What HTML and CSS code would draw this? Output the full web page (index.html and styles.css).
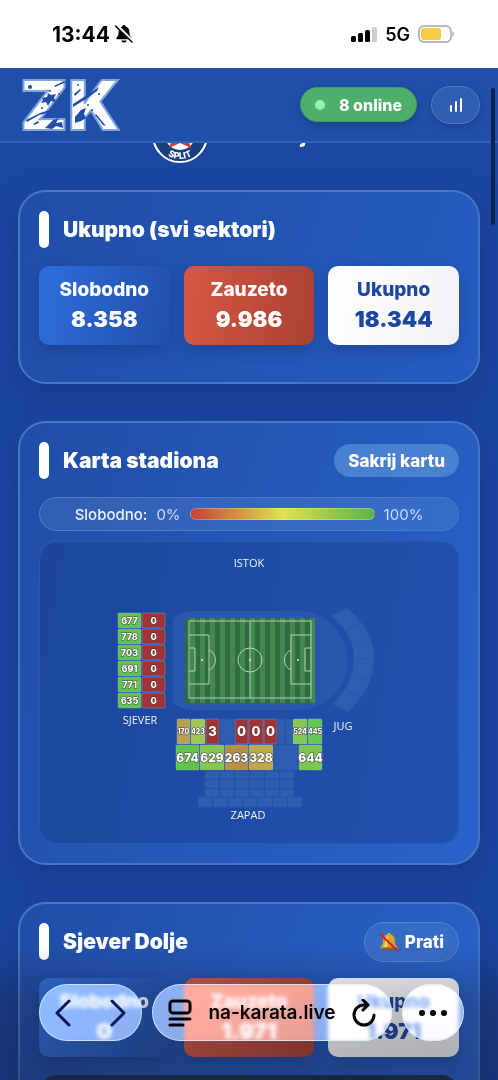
FILE: index.html
```html
<!DOCTYPE html>
<html lang="hr">
<head>
  <meta charset="UTF-8">
  <meta name="viewport" content="width=device-width, initial-scale=1">
  <title>na-karata.live</title>
  <link rel="stylesheet" href="styles.css">
</head>
<body>
  <div class="screen">
    <div class="status-bar">
      <div class="status-time">
        <span>13:44</span>
        <svg width="20" height="20" viewBox="0 0 20 20" aria-hidden="true">
          <path d="M10 1c1 0 1.500.6 1.600 1.400C14.200 3.200 15.300 5 15.400 8c.1 3.300.8 4.400 2.200 5.800.5.6.2 1.400-.6 1.400H3c-.8 0-1.100-.8-.6-1.400C3.800 12.400 4.500 11.300 4.600 8c.1-3 1.200-4.800 3.800-5.600C8.500 1.600 9 1 10 1zM7.400 16.400h5.200c-.3 1.300-1.200 2.100-2.600 2.100s-2.300-.8-2.600-2.100z" fill="#000"/>
          <path d="M2.600 1.200l16 16" stroke="#fff" stroke-width="3"/>
          <path d="M1.500 2l16.500 16" stroke="#000" stroke-width="1.500" stroke-linecap="round"/>
        </svg>
      </div>
      <div class="status-net">
        <svg width="26" height="17" viewBox="0 0 26 17" aria-hidden="true">
          <rect x="0" y="10" width="5" height="6" rx="1.500"/>
          <rect x="7" y="7" width="5" height="9" rx="1.500"/>
          <rect x="14" y="4" width="5" height="12" rx="1.500"/>
          <rect x="21" y="1" width="5" height="15" rx="1.500" fill="#ccc"/>
        </svg>
        <span>5G</span>
        <svg width="37" height="18" viewBox="0 0 37 18" aria-hidden="true">
          <rect x="1" y="1" width="32" height="16" rx="5" fill="#fff" stroke="#a5a5a5" stroke-width="1.500"/>
          <rect x="3" y="3" width="20" height="12" rx="3" fill="#f6cb45"/>
          <path d="M34.500 6.500c2 .5 2 4.500 0 5z" fill="#a5a5a5"/>
        </svg>
      </div>
    </div>

    <header class="header">
      <a class="logo" href="#" aria-label="ZK">
        <svg width="110" height="66" viewBox="0 0 110 66">
          <text class="logo-text" x="2" y="58">ZK</text>
          <g fill="#204fa9">
            <path d="M24 26l5-1 1-4 3 2 5-1-2 4 2 4-5-1-3 5-2-4-5 1 2-3z"/>
            <path d="M36 14l10-5 2 1-11 5zM8 48l14-7 13-4-2 3-12 3-12 7zM27 56l8-8 6-2-3 5 6-1 1 6-7-2-4 3zM15 52l5-3 1 2-5 2z"/>
            <path d="M55 32l14-9 12-8-2 4-11 8-13 8zM57 45l6-7 5-2-2 6 2 4-5 3-6 2zM56 22l6-5 1 1-6 6zM78 42l10 12-3-1-8-10z"/>
            <circle cx="12" cy="15" r="2"/><circle cx="32" cy="19" r="1"/><circle cx="24" cy="36" r="1"/><circle cx="41" cy="22" r="1"/><circle cx="70" cy="33" r="1"/><circle cx="81" cy="22" r="1"/><circle cx="60" cy="13" r="1"/><circle cx="74" cy="38" r="1"/>
          </g>
        </svg>
      </a>
      <div class="header-actions">
        <span class="online"><i class="online-dot"></i>8 online</span>
        <button class="stats-btn" aria-label="Statistika">
          <svg width="14" height="14" viewBox="0 0 14 14" fill="#fff" aria-hidden="true">
            <rect x="1" y="7" width="2" height="7" rx="1"/>
            <rect x="6" y="3" width="2" height="11" rx="1"/>
            <rect x="11" y="0" width="2" height="14" rx="1"/>
          </svg>
        </button>
      </div>
    </header>

    <main class="content">
      <div class="match">
        <svg width="56" height="56" viewBox="0 0 56 56" aria-hidden="true">
          <defs><path id="crestArc" d="M4 28a24 24 0 0 0 48 0"/></defs>
          <circle cx="28" cy="28" r="27" fill="#17407c" stroke="#fff" stroke-width="2"/>
          <circle cx="28" cy="28" r="15" fill="#fff"/>
          <path d="M28 12l4 9h9l-6 8 4 12-11-5-11 5 4-12-6-8h9z" fill="#d5402b"/>
          <text class="crest-text"><textPath href="#crestArc" startOffset="50%" text-anchor="middle">SPLIT</textPath></text>
        </svg>
        <h1>HNK Hajduk</h1>
      </div>

      <section class="card card-total">
        <div class="card-head"><h2>Ukupno (svi sektori)</h2></div>
        <div class="tiles">
          <div class="tile tile-free"><span>Slobodno</span><strong>8.358</strong></div>
          <div class="tile tile-taken"><span>Zauzeto</span><strong>9.986</strong></div>
          <div class="tile tile-total"><span>Ukupno</span><strong>18.344</strong></div>
        </div>
      </section>

      <section class="card">
        <div class="card-head">
          <h2>Karta stadiona</h2>
          <button class="map-toggle">Sakrij kartu</button>
        </div>
        <div class="legend">
          <b>Slobodno:</b><span>0%</span><i class="legend-bar"></i><span>100%</span>
        </div>
        <div class="map">
          <svg viewBox="0 0 418 301" role="img" aria-label="Karta stadiona">
            <defs>
              <pattern id="grass" x="145" y="0" width="10" height="10" patternUnits="userSpaceOnUse">
                <rect width="10" height="10" fill="#41894f"/>
                <rect width="5" height="10" fill="#316b3f"/>
              </pattern>
            </defs>
            <path class="track" d="M133 76Q142 69 155 69H258a49 49 0 0 1 0 99H155Q142 168 133 161z"/>
            <rect x="145" y="76" width="130" height="85" fill="url(#grass)"/>
            <g class="lines">
              <rect x="149" y="79" width="122" height="77"/>
              <path d="M210 79v77M149 93h20v49h-20M149 106h6v23h-6M271 93h-20v49h20M271 106h-6v23h6M169 108a11 11 0 0 1 0 20M251 108a11 11 0 0 0 0 20"/>
              <circle cx="210" cy="118" r="12"/>
            </g>
            <g fill="#dcebdc">
              <circle cx="162" cy="118" r="1"/><circle cx="210" cy="118" r="1"/><circle cx="258" cy="118" r="1"/>
            </g>
            <path class="closed" d="M307 66Q334 88 334 117T308 170L293 162Q314 141 314 117T292 74zM305 88l16-7M312 104l19-5M314 117h20M312 133l19 5M305 148l16 7"/>
            <g id="seats"></g>
            <g class="side">
              <text x="209" y="25">ISTOK</text>
              <text x="100" y="182">SJEVER</text>
              <text x="303" y="188">JUG</text>
              <text x="208" y="277">ZAPAD</text>
            </g>
          </svg>
        </div>
      </section>

      <section class="card">
        <div class="card-head">
          <h2>Sjever Dolje</h2>
          <button class="follow">
            <svg width="20" height="20" viewBox="0 0 20 20" aria-hidden="true">
              <path d="M10 1c1 0 2 .6 2 1.600 3 1 4 3.400 4 6.400 0 3 .6 4 2.500 6v2h-17v-2C3.400 13 4 12 4 9c0-3 1-5.400 4-6.400C8 1.600 9 1 10 1z" fill="#d9a431"/>
              <path d="M9 4c-2 1-3 3-3 6 0 2-.5 3.500-1.500 5H8c1-3 .5-7 1-11z" fill="#f6d873"/>
              <path d="M2 15.500h16v1.500H2z" fill="#9a6a1c"/>
              <circle cx="10" cy="18" r="2" fill="#8b5d19"/>
              <path d="M1 2l18 17" stroke="#d3261f" stroke-width="2.200"/>
            </svg>
            Prati
          </button>
        </div>
        <div class="tiles">
          <div class="tile tile-free"><span>Slobodno</span><strong>0</strong></div>
          <div class="tile tile-taken"><span>Zauzeto</span><strong>1.971</strong></div>
          <div class="tile tile-total"><span>Ukupno</span><strong>1.971</strong></div>
        </div>
        <div class="sector-row"></div>
      </section>
    </main>

    <div class="scroll-thumb"></div>

    <nav class="browser-bar">
      <div class="glass glass-nav">
        <button aria-label="Natrag">
          <svg width="16" height="28" viewBox="0 0 16 28" aria-hidden="true"><path d="M14 2L2 14l12 12"/></svg>
        </button>
        <button aria-label="Naprijed">
          <svg width="16" height="28" viewBox="0 0 16 28" aria-hidden="true"><path d="M2 2l12 12L2 26"/></svg>
        </button>
      </div>
      <div class="glass glass-address">
        <button aria-label="Prikaz stranice">
          <svg width="24" height="28" viewBox="0 0 24 28" aria-hidden="true"><rect x="2" y="2" width="20" height="12" rx="3"/><path d="M2 20h20M2 26h13"/></svg>
        </button>
        <span class="address">na-karata.live</span>
        <button aria-label="Osvježi">
          <svg width="24" height="28" viewBox="0 0 24 28" aria-hidden="true"><path d="M15 6h-3a10 10 0 1 0 10 10M11 1l5 5-5 5"/></svg>
        </button>
      </div>
      <button class="glass glass-more" aria-label="Više">
        <svg width="30" height="8" viewBox="0 0 30 8" aria-hidden="true"><g fill="#000" stroke="none"><circle cx="4" cy="4" r="3"/><circle cx="15" cy="4" r="3"/><circle cx="26" cy="4" r="3"/></g></svg>
      </button>
    </nav>
  </div>
  <script src="map.js"></script>
</body>
</html>
```

FILE: styles.css
```css
* {
  box-sizing: border-box;
}
body {
  margin: 0;
  font-family: Inter, "Liberation Sans", sans-serif;
  color: #fff;
  background: #1b47a3;
}
button {
  padding: 0;
  border: none;
  background: none;
  font: inherit;
  color: inherit;
  cursor: pointer;
}
svg {
  display: block;
}
.screen {
  position: relative;
  display: flex;
  flex-direction: column;
  height: 100vh;
  overflow: hidden;
}

/* Status bar */
.status-bar {
  display: flex;
  flex: none;
  align-items: center;
  justify-content: space-between;
  height: 68px;
  padding: 0 43px 0 52px;
  background: #fff;
  color: #000;
}
.status-time {
  display: flex;
  align-items: center;
  gap: 4px;
  font-size: 21px;
  font-weight: 700;
}
.status-net {
  display: flex;
  align-items: center;
  gap: 8px;
  font-size: 18px;
  font-weight: 600;
}

/* Header */
.header {
  display: flex;
  flex: none;
  align-items: center;
  justify-content: space-between;
  height: 75px;
  padding: 0 18px;
  border-bottom: 2px solid #3762b3;
  background: #204fa9;
}
.logo-text {
  font-size: 69px;
  font-weight: 900;
  fill: #fff;
  stroke: #7fa5dc;
  stroke-width: 2px;
}
.header-actions {
  display: flex;
  align-items: center;
  gap: 14px;
}
.online {
  display: flex;
  align-items: center;
  gap: 14px;
  height: 35px;
  padding: 0 14px;
  border: 1px solid #469c62;
  border-radius: 18px;
  background: #50ae6b;
  box-shadow: 0 3px 8px rgba(10, 30, 90, .3);
  font-size: 16px;
  font-weight: 800;
}
.online-dot {
  width: 10px;
  height: 10px;
  border-radius: 50%;
  background: #94efa9;
}
.stats-btn {
  display: flex;
  align-items: center;
  justify-content: center;
  width: 49px;
  height: 38px;
  border: 1px solid #5179bf;
  border-radius: 19px;
  background: #305fb2;
  box-shadow: 0 3px 8px rgba(10, 30, 90, .3);
}

/* Content */
.content {
  display: flex;
  flex: 1;
  flex-direction: column;
  gap: 37px;
  min-height: 0;
  padding: 0 18px;
  overflow: hidden;
}
.match {
  display: flex;
  flex: none;
  align-items: center;
  justify-content: center;
  gap: 12px;
  margin: -36px 0 -10px;
}
.match h1 {
  margin: 0;
  font-size: 21px;
  font-weight: 800;
}
.crest-text {
  font-size: 9px;
  font-weight: 800;
  fill: #fff;
}
.card {
  flex: none;
  padding: 19px;
  border: 2px solid #4676c5;
  border-radius: 28px;
  background: linear-gradient(110deg, #204da6, #2963cb);
  box-shadow: 0 12px 32px rgba(20, 40, 100, .45);
}
.card-total {
  padding-bottom: 37px;
  background: linear-gradient(110deg, #204da6, #255cc1);
}
.card-head {
  display: flex;
  align-items: center;
  justify-content: space-between;
  height: 37px;
  margin-bottom: 18px;
}
.card-head h2 {
  display: flex;
  align-items: center;
  gap: 14px;
  margin: 0;
  font-size: 21px;
  font-weight: 900;
  line-height: 33px;
}
.card-head h2::before {
  content: "";
  width: 10px;
  height: 37px;
  border-radius: 5px;
  background: #fff;
}
.tiles {
  display: grid;
  grid-template-columns: repeat(3, 1fr);
  gap: 14px;
}
.tile {
  display: flex;
  flex-direction: column;
  align-items: center;
  padding: 9px 0 11px;
  border-radius: 10px;
  box-shadow: 0 6px 14px rgba(15, 40, 100, .3);
  font-size: 19px;
  font-weight: 800;
  line-height: 29px;
}
.tile strong {
  font-size: 22px;
  font-weight: 900;
  line-height: 30px;
}
.tile-free {
  background: linear-gradient(100deg, #2f6edc, #204fa9);
}
.tile-taken {
  background: linear-gradient(100deg, #d55845, #ab4130);
}
.tile-total {
  background: linear-gradient(100deg, #fff, #f1f2f5);
  color: #1b47a3;
}
.map-toggle,
.follow {
  display: flex;
  align-items: center;
  gap: 6px;
  height: 33px;
  padding: 0 14px;
  border-radius: 20px;
  background: #4a80d0;
  font-size: 17px;
  font-weight: 800;
}
.follow {
  height: 40px;
  border: 1px solid #5585d2;
  background: #376cc6;
}
.legend {
  display: flex;
  align-items: center;
  justify-content: center;
  gap: 9px;
  height: 34px;
  margin-bottom: 10px;
  border: 1px solid #4c7bc8;
  border-radius: 17px;
  background: linear-gradient(90deg, #325fb2, #376ecb);
  font-size: 15px;
  color: #d0ddf5;
}
.legend b {
  font-weight: 500;
  color: #edf3fd;
}
.legend-bar {
  width: 185px;
  height: 12px;
  border: 1px solid rgba(255, 255, 255, .25);
  border-radius: 6px;
  background: linear-gradient(90deg, #c54035, #e0e14c 50%, #5cb348);
}

/* Stadium map */
.map {
  border: 1px solid #2b58ad;
  border-radius: 18px;
  background: linear-gradient(100deg, #1b469c, #2151ae);
}
.map svg {
  width: 100%;
  height: auto;
}
.track {
  fill: #2857ac;
}
.lines {
  fill: none;
  stroke: #b5d2b8;
  stroke-width: 1px;
}
.closed {
  fill: #2f5eb1;
  stroke: #2757ab;
  stroke-width: 1px;
}
.side text {
  font: 11px "Open Sans", "Noto Sans", sans-serif;
  fill: #eef3fc;
  text-anchor: middle;
}
.seat rect {
  stroke: rgba(140, 170, 220, .4);
  stroke-width: 1px;
}
.seat text {
  fill: #fff;
  stroke: #444;
  stroke-width: 1px;
  paint-order: stroke;
  font-weight: 800;
  text-anchor: middle;
}

/* Third card */
.sector-row {
  height: 60px;
  margin-top: 18px;
  border-radius: 18px;
  background: #1e2f58;
}

/* Browser chrome over the page */
.scroll-thumb {
  position: absolute;
  top: 88px;
  right: 3px;
  width: 4px;
  height: 137px;
  border-radius: 2px;
  background: #0c2455;
}
.browser-bar {
  position: absolute;
  right: 0;
  bottom: 0;
  left: 0;
  display: flex;
  gap: 10px;
  padding: 40px 34px 39px 39px;
  background: linear-gradient(rgba(20, 20, 30, 0), rgba(20, 20, 30, .25) 45%, rgba(20, 20, 30, .32));
}
.glass {
  display: flex;
  align-items: center;
  height: 57px;
  border: 1px solid rgba(220, 240, 255, .8);
  border-radius: 29px;
  background: rgba(255, 255, 255, .5);
  backdrop-filter: blur(2px) saturate(1.4) brightness(1.35);
}
.glass svg {
  fill: none;
  stroke: #000;
  stroke-width: 3px;
  stroke-linecap: round;
  stroke-linejoin: round;
}
.glass-nav {
  justify-content: space-between;
  width: 103px;
  padding: 0 15px;
}
.glass-nav svg {
  stroke: #061a55;
}
.glass-address {
  flex: 1;
  justify-content: space-between;
  padding: 0 15px;
}
.address {
  color: #000;
  font-size: 19px;
  font-weight: 600;
}
.glass-more {
  justify-content: center;
  width: 62px;
}
```

FILE: map.js
```js
const GREEN = '#62c34d';
const RED = '#a03434';
const CLOSED = '#3161b3';

// x, y, width, height, fill, free seats, font size
const seats = [];

[677, 778, 703, 691, 771, 635].forEach((free, i) => {
  const y = 71 + i * 16;
  seats.push([78, y, 23, 15, GREEN, free, 9]);
  seats.push([102, y, 23, 15, RED, 0, 9]);
});

seats.push(
  [137, 177, 13, 25, '#b9a04f', 170, 7],
  [151, 177, 14, 25, '#a0c94f', 423, 7],
  [166, 177, 13, 25, RED, 3, 13],
  [180, 177, 14, 25, CLOSED],
  [195, 177, 13, 25, RED, 0, 13],
  [209, 177, 14, 25, RED, 0, 13],
  [224, 177, 13, 25, RED, 0, 13],
  [238, 177, 7, 25, CLOSED],
  [246, 177, 6, 25, CLOSED],
  [253, 177, 14, 25, '#84c850', 524, 7],
  [268, 177, 14, 25, '#64c850', 445, 7],
  [136, 203, 23, 25, GREEN, 674, 12],
  [160, 203, 24, 25, '#86c64f', 629, 12],
  [185, 203, 23, 25, '#b68f48', 263, 12],
  [209, 203, 24, 25, '#bba84d', 328, 12],
  [234, 203, 24, 25, CLOSED],
  [259, 203, 23, 25, '#7cc64f', 644, 12]
);

for (let row = 0; row < 3; row++) {
  for (let col = 0; col < 6; col++) {
    seats.push([165 + col * 15, 229 + row * 9, 14, 8, CLOSED]);
  }
}
for (let col = 0; col < 7; col++) {
  seats.push([158 + col * 15, 255, 14, 10, CLOSED]);
}

document.getElementById('seats').innerHTML = seats.map(([x, y, w, h, fill, free, size]) => {
  if (free === undefined) {
    return `<rect class="closed" x="${x}" y="${y}" width="${w}" height="${h}" rx="1"/>`;
  }
  const ty = y + Math.round(h / 2 + size * 0.36);
  return `<g class="seat">
    <rect x="${x}" y="${y}" width="${w}" height="${h}" rx="1" fill="${fill}"/>
    <text x="${x + w / 2}" y="${ty}" font-size="${size}">${free}</text>
  </g>`;
}).join('');
```
